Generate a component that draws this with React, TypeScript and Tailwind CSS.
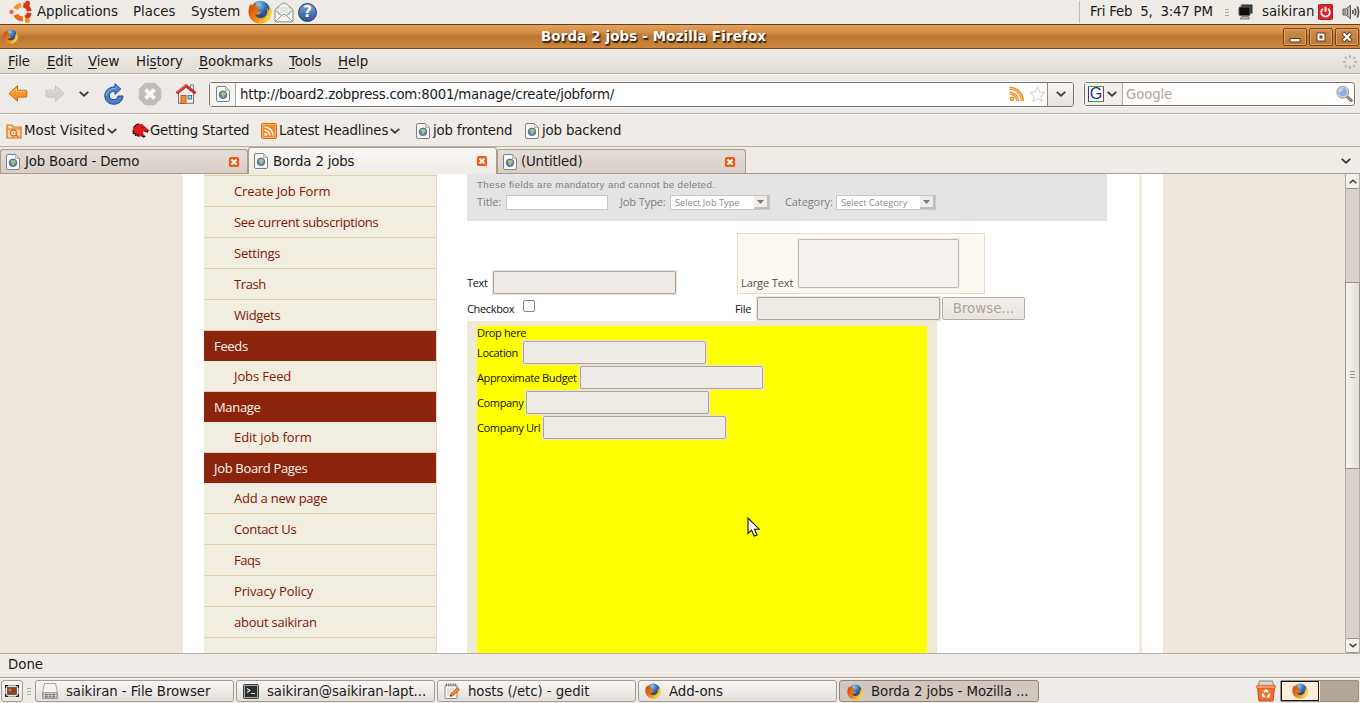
import React from 'react';

type IconProps = { className?: string };

const FirefoxIcon = ({ className = 'w-4 h-4' }: IconProps) => (
  <svg viewBox="0 0 24 24" className={`block shrink-0 ${className}`}>
    <defs>
      <radialGradient id="ffBlue" cx="0.4" cy="0.2" r="0.8">
        <stop offset="0" stopColor="#8fc9ee" />
        <stop offset="0.5" stopColor="#2d6bb5" />
        <stop offset="1" stopColor="#142a66" />
      </radialGradient>
      <linearGradient id="ffFox" x1="0" y1="0" x2="1" y2="0.6">
        <stop offset="0" stopColor="#c83c0c" />
        <stop offset="0.5" stopColor="#ee7a14" />
        <stop offset="1" stopColor="#fbc62f" />
      </linearGradient>
    </defs>
    <circle cx="12.3" cy="10.8" r="10" fill="url(#ffBlue)" />
    <path
      d="M3.6 2.6C1.2 6 .4 9.500.5 12.500 1 19.200 6 23.600 12.300 23.600c6.500 0 11.300-5 11.300-11.300 0-3.400-1.200-6-2.900-7.800.9 2.300 1.200 4.600.4 6.700-.6-1.600-1.100-2.400-2-3.200 1 4.500-.6 9-5.200 9.900-3.600.6-6.300-1.200-6.700-3.600 1.600.9 3.200.4 4.600-.6.9-.6 1.500-.7 1.300-1.400-.7-1.200-2.400-.2-3.500-1.200-.6-.9-.1-2 2-3.100-.2-1.400-1.700-1.500-3.200-1.500-1.300-.6-1.300-2.300.1-3.700-2 .3-3 1.400-3.600 2.300-.6-.1-1.100-.1-1.700.1C3 4.600 3.200 3.600 3.600 2.600z"
      fill="url(#ffFox)"
    />
    <path d="M20.700 4.500c.9 2.300 1.200 4.600.4 6.700-.1 5-3.600 9.800-9.500 9.900 6.500 1.300 11.600-3 11.800-8.800 0-3.400-1-6-2.700-7.800z" fill="#fdd83e" opacity="0.8" />
  </svg>
);

const UbuntuIcon = () => (
  <svg viewBox="0 0 24 24" className="block w-[24px] h-[24px] shrink-0">
    <g fill="none" strokeWidth="4.800">
      <path d="M6.800 9A7 7 0 0 1 12 5" stroke="#f7941e" />
      <path d="M14.300 5A7 7 0 0 1 20.300 11.200" stroke="#d9361a" />
      <path d="M20.300 12.800A7 7 0 0 1 16.500 17.900" stroke="#d9361a" />
      <path d="M14 18.700A7 7 0 0 1 6.800 14.800" stroke="#ef6a20" />
    </g>
    <circle cx="2.500" cy="11.900" r="2.200" fill="#ef6a20" />
    <circle cx="18.500" cy="3.200" r="2.500" fill="#d9361a" />
    <circle cx="18.300" cy="20.500" r="2.500" fill="#f7941e" />
  </svg>
);

const MailIcon = () => (
  <svg viewBox="0 0 20 21" className="block w-[20px] h-[21px] shrink-0">
    <path d="M1 7.500 8.500 1.200h3L19 7.500v12.300H1z" fill="#f4f4f2" stroke="#8c8c88" />
    <path d="M4 6h12v6l-6 2.500L4 12z" fill="#fff" stroke="#b8b8b4" strokeWidth="0.700" />
    <path d="M1.500 8.500 7.500 13M18.500 8.500l-6 4.500M2 19l6-6c1.300-.8 2.700-.8 4 0l6 6" fill="none" stroke="#9b9b97" />
    <path d="M5.500 8h9M5.500 10h9" stroke="#c4c4c0" />
  </svg>
);

const HelpIcon = () => (
  <span className="flex w-[19px] h-[19px] shrink-0 items-center justify-center rounded-full border border-[#1f3d6d] bg-gradient-to-b from-[#7fa1cd] to-[#2b549b] text-[15px] leading-none font-bold text-white">
    ?
  </span>
);

const PageIcon = () => (
  <svg viewBox="0 0 14 16" className="block w-[14px] h-[16px] shrink-0">
    <path d="M.5 2A1.500 1.500 0 0 1 2 .5h7.500l4 4V14a1.500 1.500 0 0 1-1.500 1.500H2A1.500 1.500 0 0 1 .5 14z" fill="#fafaf9" stroke="#7f817c" />
    <path d="M9.500.5v4h4z" fill="#deded9" stroke="#a0a29c" strokeWidth="0.700" />
    <circle cx="7" cy="8.800" r="3.800" fill="#5f86b8" stroke="#3e5f90" strokeWidth="0.800" />
    <path d="M4.800 6.800c1.500-1.300 3-.9 4.400-.2l.6 2-1.800.8-.4 2.300-1.600-1.800z" fill="#b3c868" />
  </svg>
);

const Chevron = ({ className = 'w-[10px] h-[6px]' }: IconProps) => (
  <svg viewBox="0 0 10 6" className={`block shrink-0 ${className}`}>
    <path d="M.7.900 5 4.700 9.300.9" fill="none" stroke="#3c3a37" strokeWidth="1.800" />
  </svg>
);

const RssSquare = () => (
  <svg viewBox="0 0 16 16" className="block w-[16px] h-[16px] shrink-0">
    <rect x="0.500" y="0.500" width="15" height="15" rx="1.500" fill="#f08a24" stroke="#d86a10" />
    <rect x="1.500" y="1.500" width="13" height="13" fill="none" stroke="#fbc083" strokeWidth="0.800" />
    <circle cx="4.800" cy="11.300" r="1.500" fill="#fff" />
    <path d="M3.500 7.200a5.400 5.400 0 0 1 5.400 5.400M3.500 4a8.600 8.600 0 0 1 8.600 8.600" fill="none" stroke="#fff" strokeWidth="1.600" />
  </svg>
);

const RssOutline = () => (
  <svg viewBox="0 0 16 16" className="block w-[16px] h-[16px] shrink-0">
    <g fill="none">
      <circle cx="3" cy="12.800" r="1.800" fill="#fbc58a" stroke="#f3861b" strokeWidth="1.200" />
      <path d="M.5 7a8 8 0 0 1 8 8M.5 2.200A12.800 12.800 0 0 1 13.300 15" stroke="#f3861b" strokeWidth="3.200" />
      <path d="M.5 7a8 8 0 0 1 8 8M.5 2.200A12.800 12.800 0 0 1 13.300 15" stroke="#fbd0a0" strokeWidth="1" />
    </g>
  </svg>
);

const MostVisitedIcon = () => (
  <svg viewBox="0 0 16 16" className="block w-[16px] h-[16px] shrink-0">
    <path d="M1 2h5l1 2h8v11H1z" fill="#f8d3a8" stroke="#d9731c" strokeWidth="1.200" />
    <path d="M1 6h14" stroke="#d9731c" />
    <circle cx="7.500" cy="10" r="3" fill="#fff0dd" stroke="#d9731c" strokeWidth="1.300" />
    <circle cx="7.500" cy="10" r="1" fill="#e98a35" />
    <path d="m10 12 3 2.500" stroke="#d9731c" strokeWidth="1.500" />
  </svg>
);

const DinoIcon = () => (
  <svg viewBox="0 0 17 15" className="block w-[17px] h-[15px] shrink-0">
    <path d="M1.500 4.500 4 2 6.500.8l4 .4 2.800 2.600 3 3-.8 2.200-3.200-1-1.300.8.500 2.500 1.700 1.700-1.500 1L9 12.500 7.500 14l-1.700-.5.2-2-2.600 1-.2-2.200-2 .3.500-2L.5 7.800z" fill="#e01b1b" />
    <path d="M1.500 4.500 4 2 6.500.8M.5 7.800l1.200.8-.5 2 2-.3.200 2.200 2.600-1-.2 2M9 12.500l2.700 1.500 1.500-1M12.300 8l3.200 1 .8-2.200" fill="none" stroke="#2a0808" strokeWidth="1.100" />
    <path d="M9.500 4.200 11 5" stroke="#1c0606" strokeWidth="1.200" fill="none" />
  </svg>
);

const TabClose = () => (
  <svg viewBox="0 0 10 10" className="block w-[10px] h-[10px] shrink-0">
    <rect width="10" height="10" rx="1.500" fill="#f25c10" />
    <path d="m2.500 2.500 5 5m0-5-5 5" stroke="#fff" strokeWidth="1.900" />
  </svg>
);

const ArrowIcon = ({ dir }: { dir: 'back' | 'forward' }) => (
  <svg viewBox="0 0 20 18" className={`block w-[20px] h-[18px] shrink-0 ${dir === 'forward' ? '-scale-x-100' : ''}`}>
    <path
      d="M1 8.500 9.500.8v4.500H18q.8 0 .8.800v5.200q0 .8-.8.800H9.500v4.200z"
      fill={dir === 'back' ? '#f7942a' : '#d6d2cd'}
      stroke={dir === 'back' ? '#c9650c' : '#c9c4be'}
    />
    <path d="M3 8.300 8.500 3.300v3H17.500" fill="none" stroke={dir === 'back' ? '#fdca84' : '#e4e1dd'} />
  </svg>
);

const ReloadIcon = () => (
  <svg viewBox="0 0 20 22" className="block w-[20px] h-[22px] shrink-0">
    <path d="M11 .8 16.800 6 11 11.300V8.200C7 8.300 5.300 10.300 5.300 12.700c0 2.500 2 4 4.300 4 2.500 0 4-1.500 4.400-3.700h5C18.500 18 15 21.200 9.800 21.200 4.500 21.200.8 17.700.8 12.700.8 8 4.800 4 11 3.800z" fill="#4a80cc" stroke="#1f4a8c" />
    <path d="M2.300 12.500C2.300 8.500 6 5.500 12 5.400V3.500" fill="none" stroke="#93b8e6" />
  </svg>
);

const StopIcon = () => (
  <svg viewBox="0 0 24 24" className="block w-[24px] h-[24px] shrink-0">
    <path d="M7.200.8h9.600l6.400 6.400v9.600l-6.400 6.400H7.200L.8 16.800V7.200z" fill="#c3bbb8" />
    <path d="m7.500 7.500 9 9m0-9-9 9" stroke="#f8f6f5" strokeWidth="4" />
  </svg>
);

const HomeIcon = () => (
  <svg viewBox="0 0 22 20" className="block w-[22px] h-[20px] shrink-0">
    <rect x="15.500" y="1" width="3" height="5" fill="#e9e7e3" stroke="#77736e" strokeWidth="0.800" />
    <path d="M3.500 9 11 3l7.500 6v10.300h-15z" fill="#f1efec" stroke="#77736e" />
    <path d="M1.500 9.200 11 1.800l9.500 7.400" fill="none" stroke="#c53232" strokeWidth="3" />
    <path d="M1.800 8.200 11 1" fill="none" stroke="#e88484" strokeWidth="0.800" />
    <rect x="6" y="11.500" width="5" height="8" fill="#ef8b38" stroke="#a9560f" strokeWidth="0.900" />
    <rect x="13" y="11.500" width="3.500" height="3.500" fill="#9bd2ec" stroke="#3f6f8f" strokeWidth="0.900" />
  </svg>
);

const StarIcon = () => (
  <svg viewBox="0 0 17 16" className="block w-[17px] h-[16px] shrink-0">
    <path d="m8.500 1 2.200 5 5.300.5-4 3.600 1.200 5.200-4.700-2.800-4.700 2.800L5 10.100 1 6.500 6.300 6z" fill="#fdfdfd" stroke="#cfcdca" strokeLinejoin="round" />
  </svg>
);

const SearchIcon = () => (
  <svg viewBox="0 0 17 16" className="block w-[17px] h-[16px] shrink-0">
    <path d="m10.500 10 4.700 4.500" stroke="#696b68" strokeWidth="3" strokeLinecap="round" />
    <path d="m11 10.500 3.800 3.600" stroke="#b9bab7" strokeWidth="1" strokeLinecap="round" />
    <circle cx="6.800" cy="6.300" r="5.300" fill="#86b0e4" stroke="#d5d6d4" strokeWidth="2" />
    <circle cx="6.800" cy="6.300" r="5.900" fill="none" stroke="#8a8c88" strokeWidth="0.800" />
    <path d="M4 6a3 3 0 0 1 3-2.800" fill="none" stroke="#dcebfa" strokeWidth="1.500" />
  </svg>
);

const MonitorsIcon = () => (
  <svg viewBox="0 0 15 16" className="block w-[15px] h-[16px] shrink-0">
    <rect x="3" y="0.500" width="11.500" height="9" rx="1" fill="#3a3b39" stroke="#8b8c88" />
    <rect x="1" y="3" width="11" height="8.500" rx="1" fill="#0e0f0e" stroke="#5d5e5b" />
    <path d="M2 15h9.500l-1-2.500h-7z" fill="#b2b3af" stroke="#6e6f6c" strokeWidth="0.800" />
  </svg>
);

const PowerIcon = () => (
  <svg viewBox="0 0 15 16" className="block w-[15px] h-[16px] shrink-0">
    <rect x="0.500" y="0.500" width="14" height="15" rx="1" fill="#d9252a" stroke="#c4151b" />
    <path d="M5 4.800a4.300 4.300 0 1 0 5 0" fill="none" stroke="#fff" strokeWidth="1.700" />
    <path d="M7.500 2.800v5" stroke="#fff" strokeWidth="1.900" />
  </svg>
);

const SpeakerIcon = () => (
  <svg viewBox="0 0 18 16" className="block w-[18px] h-[16px] shrink-0">
    <path d="M1 5h3l4.500-3.800v13.600L4 11H1z" fill="#b9bab7" stroke="#5a5b58" />
    <path d="M3 6v4M5.500 5v6" stroke="#6f706c" />
    <path d="M10.500 6q1 2 0 4M12.800 4.500q1.700 3.500 0 7M15.300 2.500q2.400 5.500 0 11" fill="none" stroke="#4e4f4c" strokeWidth="1.600" />
  </svg>
);

const Throbber = () => (
  <svg viewBox="0 0 14 14" className="block w-[14px] h-[14px] shrink-0">
    <g stroke="#bdb9b4" strokeWidth="2.200">
      <path d="M7 0v3M7 11v3M0 7h3M11 7h3M2 2l1.700 1.700M10.300 10.300 12 12M12 2l-1.700 1.700M3.700 10.300 2 12" />
    </g>
  </svg>
);

const DesktopIcon = () => (
  <svg viewBox="0 0 14 12" className="block w-[14px] h-[12px] shrink-0">
    <rect x="0.700" y="0.700" width="12.600" height="10.600" fill="#fdfdfc" stroke="#8d8a85" />
    <path d="M.5 3V.5H3M11 .5h2.500V3M13.500 9v2.500H11M3 11.500H.5V9" fill="none" stroke="#1d1d1b" strokeWidth="1.300" />
    <rect x="2.500" y="2.500" width="9" height="7" fill="#8a452b" stroke="#50281b" strokeWidth="0.600" />
    <circle cx="5" cy="5" r="1.600" fill="#d27b55" />
  </svg>
);

const DriveIcon = () => (
  <svg viewBox="0 0 16 16" className="block w-[16px] h-[16px] shrink-0">
    <path d="M2.500.5h11l2 9v6H.5v-6z" fill="#f4f4f3" stroke="#a3a5a0" />
    <rect x="1" y="9.500" width="14" height="6" fill="#c6c7c4" stroke="#8d8e8a" strokeWidth="0.700" />
    <path d="M3 11h10v3.500H3z" fill="#70716d" />
    <path d="M3 12.700h10M6.300 11v3.500M9.700 11v3.500" stroke="#d9dad7" strokeWidth="0.800" />
  </svg>
);

const TerminalIcon = () => (
  <svg viewBox="0 0 16 15" className="block w-[16px] h-[15px] shrink-0">
    <rect x="0.500" y="0.500" width="15" height="14" rx="1" fill="#a9aba6" stroke="#3e403d" />
    <rect x="2" y="2" width="12" height="11" fill="#2b3133" />
    <path d="m4 4.500 3 2-3 2M8 9.500h4" fill="none" stroke="#dfe3df" strokeWidth="1.100" />
  </svg>
);

const GeditIcon = () => (
  <svg viewBox="0 0 16 16" className="block w-[16px] h-[16px] shrink-0">
    <rect x="1" y="2" width="12" height="13.500" rx="1" fill="#fbfbfa" stroke="#868783" />
    <path d="M2.500.5v3M4.700.5v3M6.900.5v3M9.100.5v3M11.300.5v3" stroke="#6f706c" strokeWidth="1" />
    <path d="M3 6h7M3 8h5M3 10h4M3 12h3" stroke="#b7b8b4" strokeWidth="0.800" />
    <path d="M6 13.500 7 10.500 13.500 4.500 15.500 6.700 9 12.800z" fill="#f5821f" stroke="#a6530f" strokeWidth="0.700" />
    <path d="m6 13.500.6-1.700 1.200 1z" fill="#20201f" />
  </svg>
);

const TrashIcon = () => (
  <svg viewBox="0 0 20 22" className="block w-[20px] h-[22px] shrink-0">
    <path d="M3.500 1h13l1.500 6H2z" fill="#d8d8d5" stroke="#878883" />
    <path d="M1.500 7.500h17L17 21H3z" fill="#f1712a" stroke="#c44d10" />
    <rect x="0.700" y="5.300" width="18.600" height="3.200" rx="0.800" fill="#f59a62" stroke="#d6601c" strokeWidth="0.800" />
    <path d="m8 12 2-1.800 2 1.800M13.500 13.500l-.7 3h-2M6.500 13.500l.7 3h2" fill="none" stroke="#fff" strokeWidth="1.900" />
  </svg>
);

const Cursor = () => (
  <svg viewBox="0 0 14 21" className="block w-[14px] h-[21px]">
    <path d="M1 1v15.500l3.600-3.300 2.600 5.900 2.900-1.200-2.600-5.700h4.700z" fill="#fff" stroke="#111" strokeWidth="1.100" />
  </svg>
);

const Grip = () => (
  <span className="flex shrink-0 flex-col gap-[2px]">
    <i className="h-px w-[4px] bg-[#b3aaa0]" />
    <i className="h-px w-[4px] bg-[#b3aaa0]" />
    <i className="h-px w-[4px] bg-[#b3aaa0]" />
  </span>
);

function TopPanel() {
  return (
    <div className="flex h-[24px] shrink-0 items-center bg-[#efebe6]">
      <span className="w-[9px]" />
      <UbuntuIcon />
      <span className="ml-[4px] w-[96px] pb-px tracking-[-0.050px]">Applications</span>
      <span className="w-[58px] pb-px">Places</span>
      <span className="w-[57px] pb-px tracking-[-0.100px]">System</span>
      <FirefoxIcon className="w-[24px] h-[24px]" />
      <span className="w-[2px]" />
      <MailIcon />
      <span className="w-[4px]" />
      <HelpIcon />
      <span className="ml-auto h-[22px] w-px bg-[#c4bdb5]" />
      <span className="ml-[10px] w-[135px] whitespace-pre tracking-[-0.220px]">Fri Feb  5,  3:47 PM</span>
      <Grip />
      <span className="w-[9px]" />
      <MonitorsIcon />
      <span className="ml-[9px] w-[56px]">saikiran</span>
      <PowerIcon />
      <span className="w-[9px]" />
      <SpeakerIcon />
    </div>
  );
}

function WindowButton({ children }: { children: React.ReactNode }) {
  return (
    <span className="flex h-[18px] w-[24px] items-center justify-center rounded-[2px] border border-[#75431a] bg-gradient-to-b from-[#d08c4b] to-[#b77935] shadow-[inset_0_0_0_1px_#dba36b]">
      <svg viewBox="0 0 12 12" className="block h-[12px] w-[12px]">{children}</svg>
    </span>
  );
}

function TitleBar() {
  return (
    <div className="flex h-[25px] shrink-0 items-center border-t border-b border-t-[#56432c] border-b-[#7a4a20] bg-[linear-gradient(#e6a258_0%,#d68e48_30%,#b87630_52%,#c67f38_75%,#cd8538_100%)] pr-px">
      <span className="w-[3px]" />
      <FirefoxIcon className="w-[15px] h-[15px]" />
      <span className="ml-[523px] text-[13.330px] font-bold tracking-[0.190px] text-white [text-shadow:1px_1px_1px_#3a2510,1px_2px_1px_#3a2510]">
        Borda 2 jobs - Mozilla Firefox
      </span>
      <span className="ml-auto flex gap-[2px]">
        <WindowButton><path d="M1 7.500h10v3.500H1z" fill="#fff" stroke="#5f3818" /></WindowButton>
        <WindowButton><path d="M3.500 3.500h5v5h-5z" fill="none" stroke="#5f3818" strokeWidth="4" /><path d="M3.500 3.500h5v5h-5z" fill="none" stroke="#fff" strokeWidth="2" /></WindowButton>
        <WindowButton><path d="m2 2 8 8m0-8-8 8" stroke="#5f3818" strokeWidth="4.200" /><path d="m2.500 2.500 7 7m0-7-7 7" stroke="#fff" strokeWidth="2.400" /></WindowButton>
      </span>
    </div>
  );
}

const menus = [
  { a: '', u: 'F', b: 'ile', w: 'w-[39px]' },
  { a: '', u: 'E', b: 'dit', w: 'w-[41px]' },
  { a: '', u: 'V', b: 'iew', w: 'w-[48px]' },
  { a: 'Hi', u: 's', b: 'tory', w: 'w-[63px]' },
  { a: '', u: 'B', b: 'ookmarks', w: 'w-[90px]' },
  { a: '', u: 'T', b: 'ools', w: 'w-[49px]' },
  { a: '', u: 'H', b: 'elp', w: 'w-[60px]' },
];

function MenuBar() {
  return (
    <div className="flex h-[25px] shrink-0 items-center border-b border-[#b9b0a6] bg-gradient-to-b from-[#efebe7] to-[#e2dcd4] pt-px pl-[8px] pr-[3px]">
      {menus.map((m) => (
        <span key={m.u + m.b} className={`${m.w} shrink-0 pt-px tracking-[-0.080px]`}>
          {m.a}
          <span className="underline underline-offset-2">{m.u}</span>
          {m.b}
        </span>
      ))}
      <span className="ml-auto"><Throbber /></span>
    </div>
  );
}

function NavBar() {
  return (
    <div className="flex h-[40px] shrink-0 items-center border-t border-b border-t-[#fbfaf9] border-b-[#b9b0a6] bg-[#eeeae7]">
      <span className="w-[8px]" />
      <ArrowIcon dir="back" />
      <span className="w-[17px]" />
      <ArrowIcon dir="forward" />
      <span className="w-[14px]" />
      <Chevron />
      <span className="w-[15px]" />
      <ReloadIcon />
      <span className="w-[14px]" />
      <StopIcon />
      <span className="w-[13px]" />
      <HomeIcon />
      <div className="ml-[12px] flex h-[25px] w-[865px] shrink-0 items-center rounded-[3px] border border-[#7d7066] bg-white shadow-[0_0_0_1px_#f8f6f4]">
        <span className="flex h-full w-[26px] items-center border-r border-[#b2a89e] bg-[#f6f4f2] pl-[6px]"><PageIcon /></span>
        <span className="ml-[4px] w-[769px] pt-px tracking-[-0.270px]">http://board2.zobpress.com:8001/manage/create/jobform/</span>
        <RssOutline />
        <span className="w-[4px]" />
        <StarIcon />
        <span className="ml-auto flex h-full w-[26px] items-center justify-center rounded-r-[2px] border-l border-[#93877c] bg-gradient-to-b from-[#f8f6f5] to-[#e6e1dc]"><Chevron /></span>
      </div>
      <div className="ml-[10px] flex h-[24px] w-[271px] shrink-0 items-center rounded-[3px] border border-[#7d7066] bg-white shadow-[0_0_0_1px_#f8f6f4]">
        <span className="flex h-full w-[38px] items-center border-r border-[#b2a89e] bg-[#f1eeeb] pl-[3px]">
          <span className="flex h-[16px] w-[16px] items-center justify-center border border-t-[#3aa52c] border-r-[#d02a20] border-b-[#3aa52c] border-l-[#1c3fb5] bg-white font-['Liberation_Sans'] text-[16px] leading-[14px] text-[#1231a0]">G</span>
          <span className="w-[3px]" />
          <Chevron />
        </span>
        <span className="ml-[3px] pt-px tracking-[-0.150px] text-[#aea59b]">Google</span>
        <span className="mr-px ml-auto"><SearchIcon /></span>
      </div>
    </div>
  );
}

function BookmarksBar() {
  return (
    <div className="flex h-[33px] shrink-0 items-center border-t border-b border-t-[#fbfaf9] border-b-[#bcb2a4] bg-[#efebe6] pl-[6px]">
      <MostVisitedIcon />
      <span className="ml-[2px] w-[83px]">Most Visited</span>
      <Chevron />
      <span className="w-[15px]" />
      <DinoIcon />
      <span className="ml-px w-[111px] tracking-[-0.250px]">Getting Started</span>
      <RssSquare />
      <span className="ml-[2px] w-[111px] tracking-[-0.130px]">Latest Headlines</span>
      <Chevron />
      <span className="w-[16px]" />
      <PageIcon />
      <span className="ml-[3px] w-[92px] tracking-[-0.170px]">job frontend</span>
      <PageIcon />
      <span className="ml-[3px] tracking-[-0.150px]">job backend</span>
    </div>
  );
}

function Tab({ title, active, wide, closePad, gap }: { title: string; active?: boolean; wide: string; closePad: string; gap: string }) {
  return (
    <div
      className={
        active
          ? `flex h-[27px] shrink-0 items-center rounded-t-[3px] border-t border-r border-l border-[#a79c92] bg-gradient-to-b from-[#f9f7f5] to-[#efebe6] pl-[5px] ${wide} ${closePad}`
          : `mb-px flex h-[24px] shrink-0 items-center rounded-t-[3px] border-t border-r border-l border-[#a79c92] bg-gradient-to-b from-[#e5ddd8] to-[#d8cec7] pl-[5px] ${wide} ${closePad}`
      }
    >
      <PageIcon />
      <span className={`${gap} tracking-[-0.170px] ${active ? 'pt-px' : ''}`}>{title}</span>
      <span className="ml-auto"><TabClose /></span>
    </div>
  );
}

function TabStrip() {
  return (
    <div className="flex h-[27px] shrink-0 items-end bg-[#efebe6] shadow-[inset_0_-1px_0_#a79c92]">
      <Tab title="Job Board - Demo" wide="w-[248px]" closePad="pr-[8px]" gap="ml-[5px]" />
      <Tab title="Borda 2 jobs" active wide="w-[249px]" closePad="pr-[9px]" gap="ml-[5px]" />
      <Tab title="(Untitled)" wide="w-[249px]" closePad="pr-[10px]" gap="ml-[4px]" />
      <span className="mr-[9px] mb-[10px] ml-auto"><Chevron /></span>
    </div>
  );
}

const sections: { heading?: string; items: [string, string][] }[] = [
  {
    items: [
      ['Create Job Form', 'tracking-[-0.090px]'],
      ['See current subscriptions', 'tracking-[-0.400px]'],
      ['Settings', 'tracking-[-0.250px]'],
      ['Trash', 'tracking-[-0.400px]'],
      ['Widgets', 'tracking-[-0.300px]'],
    ],
  },
  { heading: 'Feeds', items: [['Jobs Feed', 'tracking-[-0.100px]']] },
  { heading: 'Manage', items: [['Edit job form', 'tracking-[-0.050px]']] },
  {
    heading: 'Job Board Pages',
    items: [
      ['Add a new page', 'tracking-[-0.220px]'],
      ['Contact Us', 'tracking-[-0.350px]'],
      ['Faqs', 'tracking-[-0.500px]'],
      ['Privacy Policy', 'tracking-[-0.150px]'],
      ['about saikiran', 'tracking-[-0.250px]'],
    ],
  },
];

function Sidebar() {
  return (
    <nav className="ml-[21px] w-[233px] shrink-0 border-r border-[#e3d9cc] bg-[#f1ede0] text-[13px] font-medium">
      <div className="h-[2px] border-b border-[#ded2ad]" />
      {sections.map((s) => (
        <div key={s.heading ?? 'top'}>
          {s.heading && <h3 className="flex h-[30px] items-center bg-[#8b240b] pl-[10px] font-medium tracking-[-0.330px] text-[#fbf6ef]">{s.heading}</h3>}
          {s.items.map(([t, track]) => (
            <a key={t} className={`flex h-[31px] items-center border-b border-[#ded2ad] pl-[30px] text-[#861503] ${track}`}>{t}</a>
          ))}
        </div>
      ))}
    </nav>
  );
}

const Field = () => (
  <span className="h-[25px] w-[185px] shrink-0 bg-[#e8e3dc] p-px">
    <span className="block h-full w-full rounded-[2px] border border-[#b1a398] bg-[#eeeae6]" />
  </span>
);

function MiniSelect({ label }: { label: string }) {
  return (
    <span className="flex h-[15px] w-[100px] shrink-0 items-center border border-[#c8c8c8] bg-white pl-[4px] text-[9.300px] tracking-[-0.030px] text-[#8b8b8b]">
      {label}
      <span className="ml-auto flex h-[13px] w-[15px] items-center justify-center border-r-2 border-b-2 border-[#c0bfbd] bg-[#efebe8]">
        <svg viewBox="0 0 7 4" className="block h-[4px] w-[7px]"><path d="M0 0h7L3.500 4z" fill="#7b7874" /></svg>
      </span>
    </span>
  );
}

const dropped = [
  { label: 'Location', w: 'w-[45px]' },
  { label: 'Approximate Budget', w: 'w-[102px]' },
  { label: 'Company', w: 'w-[48px]' },
  { label: 'Company Url', w: 'w-[65px]' },
];

function FormBuilder() {
  return (
    <main className="ml-[30px] flex w-[672px] shrink-0 flex-col text-[11px] font-medium tracking-[-0.350px] text-[#101010]">
      <section className="h-[47px] w-[640px] shrink-0 bg-[#e4e4e4] pl-[10px] text-[#7d7d7d]">
        <p className="h-[21px] pt-[4px] font-['Liberation_Sans'] text-[9.800px] leading-[13px] font-normal tracking-[0.350px]">These fields are mandatory and cannot be deleted.</p>
        <div className="flex h-[15px] items-center tracking-[-0.100px]">
          <span className="w-[29px] pb-px">Title:</span>
          <span className="h-[15px] w-[102px] border border-[#c8c8c8] bg-white" />
          <span className="ml-[12px] w-[50px] pb-px">Job Type:</span>
          <MiniSelect label="Select Job Type" />
          <span className="ml-[15px] w-[51px] pb-px">Category:</span>
          <MiniSelect label="Select Category" />
        </div>
      </section>
      <div className="mt-[12px] flex h-[61px] shrink-0 items-end">
        <div className="-mb-px flex w-[270px] items-center">
          <span className="w-[25px]">Text</span>
          <Field />
        </div>
        <div className="flex h-[61px] w-[248px] items-start border border-[#e6dcbf] bg-[#fcf9f2] pt-[4px] pl-[3px]">
          <span className="w-[56px] pt-[36px] tracking-[-0.100px] text-[#4f4f4f]">Large Text</span>
          <span className="h-[51px] w-[163px] bg-[#f2ede8] p-px">
            <span className="block h-full w-full rounded-[2px] border border-[#c4b9b1] bg-[#f4f0ed]" />
          </span>
        </div>
      </div>
      <div className="mt-[2px] flex h-[25px] shrink-0 items-center">
        <span className="w-[56px]">Checkbox</span>
        <span className="mb-[6px] h-[12px] w-[12px] rounded-[2px] border border-[#8f8278] bg-white" />
        <span className="ml-[200px] w-[21px]">File</span>
        <Field />
        <span className="ml-px flex h-[23px] w-[83px] items-center justify-center rounded-[2px] border border-[#b9ada2] bg-gradient-to-b from-[#f2efec] to-[#e9e5e0] font-['DejaVu_Sans'] text-[13.330px] font-normal tracking-[0.030px] text-[#afa499]">Browse...</span>
      </div>
      <section className="flex w-[470px] grow flex-col bg-[#f0ead5] pt-[5px] pr-[10px] pl-[10px]">
        <div className="grow bg-[#ffff00]">
          <p className="h-[14px] leading-[14px]">Drop here</p>
          {dropped.map((d) => (
            <div key={d.label} className="flex h-[25px] items-center">
              <span className={`${d.w} shrink-0`}>{d.label}</span>
              <Field />
            </div>
          ))}
        </div>
      </section>
    </main>
  );
}

function ScrollBar() {
  return (
    <div className="flex w-[15px] shrink-0 flex-col border-r border-l border-[#b8aea5] bg-[#d9d0cb]">
      <span className="flex h-[15px] items-center justify-center rounded-[2px] border-b border-[#9b9087] bg-[#f3f1ee]"><Chevron className="h-[5px] w-[8px] rotate-180" /></span>
      <span className="-mx-px mt-[93px] flex h-[187px] flex-col items-center justify-center gap-[2px] border border-[#9b9288] bg-gradient-to-r from-[#f6f4f2] to-[#e3dfd9] pb-[2px]">
        <i className="h-px w-[5px] bg-[#9b9288]" />
        <i className="h-px w-[5px] bg-[#9b9288]" />
        <i className="h-px w-[5px] bg-[#9b9288]" />
      </span>
      <span className="mt-auto flex h-[15px] items-center justify-center rounded-[2px] border-t border-b border-[#9b9087] bg-[#f3f1ee]"><Chevron className="h-[5px] w-[8px]" /></span>
    </div>
  );
}

function Viewport() {
  return (
    <div className="relative flex h-[479px] shrink-0 overflow-hidden bg-[#efe7de] font-['Open_Sans','Noto_Sans',sans-serif]">
      <div className="ml-[183px] flex w-[980px] shrink-0 bg-white">
        <Sidebar />
        <FormBuilder />
        <div className="w-[3px] bg-[#f1ede0]" />
      </div>
      <div className="ml-auto flex"><ScrollBar /></div>
      <div className="absolute top-[343px] left-[747px]"><Cursor /></div>
    </div>
  );
}

function Task({ icon, label, active, w = 'w-[199px]' }: { icon: React.ReactNode; label: string; active?: boolean; w?: string }) {
  return (
    <div
      className={
        active
          ? `flex h-[22px] shrink-0 items-center rounded-[3px] border border-[#8f857b] bg-[#d1c7bf] pt-px pl-[7px] ${w}`
          : `flex h-[22px] shrink-0 items-center rounded-[3px] border border-[#a59b91] bg-gradient-to-b from-[#f8f6f5] to-[#e4dfda] pl-[6px] ${w}`
      }
    >
      {icon}
      <span className="ml-[8px] pt-px tracking-[-0.080px]">{label}</span>
    </div>
  );
}

function BottomPanel() {
  return (
    <div className="flex h-[25px] shrink-0 items-center border-t border-[#fbfaf9] bg-[#efebe6] pl-px">
      <span className="flex h-[22px] w-[22px] items-center justify-center rounded-[3px] border border-[#a59b91] bg-gradient-to-b from-[#f8f6f5] to-[#e9e5e0]"><DesktopIcon /></span>
      <span className="w-[4px]" />
      <Grip />
      <div className="ml-[4px] flex gap-[2px]">
        <Task icon={<DriveIcon />} label="saikiran - File Browser" />
        <Task icon={<TerminalIcon />} label="saikiran@saikiran-lapt..." />
        <Task icon={<GeditIcon />} label="hosts (/etc) - gedit" />
        <Task icon={<FirefoxIcon />} label="Add-ons" />
        <Task icon={<FirefoxIcon />} label="Borda 2 jobs - Mozilla ..." active w="w-[200px]" />
      </div>
      <span className="ml-auto"><TrashIcon /></span>
      <div className="mr-px ml-[4px] flex h-[22px] w-[79px] rounded-[2px] border border-[#9c8f82] bg-[#b3a698]">
        <span className="flex w-[38px] items-center justify-center border border-[#1c1a17] bg-[#feefdc]"><FirefoxIcon className="h-[16px] w-[16px]" /></span>
        <span className="w-px bg-[#f2eee9]" />
      </div>
    </div>
  );
}

export default function App() {
  return (
    <div className="flex h-[703px] w-[1360px] flex-col overflow-hidden bg-[#efebe6] font-['DejaVu_Sans',sans-serif] text-[13.330px] leading-[18px] whitespace-nowrap text-[#1a1a1a]">
      <TopPanel />
      <TitleBar />
      <MenuBar />
      <NavBar />
      <BookmarksBar />
      <TabStrip />
      <Viewport />
      <div className="h-[25px] shrink-0 border-t border-b border-t-[#b9b0a6] border-b-[#a79c92] bg-[#efebe6] pt-[2px] pl-[8px]">Done</div>
      <BottomPanel />
    </div>
  );
}
